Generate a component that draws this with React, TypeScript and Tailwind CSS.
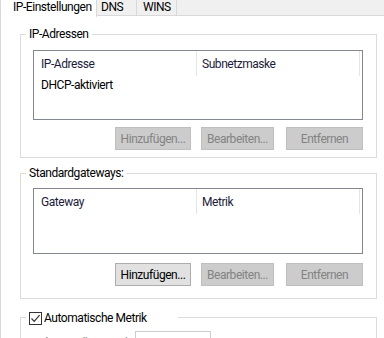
import React from "react";

const font = { fontFamily: 'Roboto, "Noto Sans", sans-serif' };

function Btn({ label, w, enabled, ml }: { label: string; w: string; enabled?: boolean; ml: string }) {
  return (
    <div
      className={`${w} ${ml} h-[23px] flex items-center justify-center border whitespace-nowrap ${
        enabled ? "bg-[#e1e1e1] border-[#adadad] text-black" : "bg-[#cccccc] border-[#bfbfbf] text-[#838383]"
      }`}
    >
      {label}
    </div>
  );
}

function ListView({ h, mt, col1, col2, rows }: { h: string; mt: string; col1: string; col2: string; rows: string[] }) {
  return (
    <div className={`${mt} ml-[12px] w-[330px] ${h} border border-[#828790] bg-white`}>
      <div className="flex h-[25px] text-[#1b1b3a]">
        <div className="w-[163px] border-r border-[#e5e5e5] pl-[7px] leading-[26px]">{col1}</div>
        <div className="w-[163px] border-r border-[#e5e5e5] pl-[5px] leading-[26px]">{col2}</div>
      </div>
      {rows.map((r) => (
        <div key={r} className="h-[17px] leading-[18px] pl-[7px] text-black">
          {r}
        </div>
      ))}
    </div>
  );
}

export default function App() {
  return (
    <div
      className="w-[384px] h-[338px] overflow-hidden bg-white text-black text-[12px] tracking-[-0.45px] whitespace-nowrap"
      style={font}
    >
      <div className="h-[16px] bg-[#f0f0f0] border-b border-[#d9d9d9] flex items-start">
        <div className="w-[97px] h-[17px] bg-white border-r border-l border-[#d9d9d9] pl-[12px] leading-[14px] relative z-10">
          IP-Einstellungen
        </div>
        <div className="w-[40px] h-[15px] border-r border-[#d9d9d9] pl-[4px] leading-[15px]">DNS</div>
        <div className="w-[40px] h-[15px] border-r border-[#d9d9d9] pl-[6px] leading-[15px]">WINS</div>
      </div>
      <div className="border-l border-[#d9d9d9] pl-[19px] pt-[18px] flex flex-col h-[322px]">
        {/* Group 1 */}
        <div className="relative w-[357px] h-[124px] border border-[#dcdcdc] shrink-0">
          <span className="absolute left-[5px] top-[-9px] px-[3px] bg-white leading-[16px]">IP-Adressen</span>
          <ListView h="h-[70px]" mt="mt-[15px]" col1="IP-Adresse" col2="Subnetzmaske" rows={["DHCP-aktiviert"]} />
          <div className="flex mt-[7px]">
            <Btn label="Hinzufügen..." w="w-[76px]" ml="ml-[94px]" />
            <Btn label="Bearbeiten..." w="w-[73px]" ml="ml-[10px]" />
            <Btn label="Entfernen" w="w-[77px]" ml="ml-[12px]" />
          </div>
        </div>
        {/* Group 2 */}
        <div className="relative mt-[15px] w-[357px] h-[126px] border border-[#dcdcdc] shrink-0">
          <span className="absolute left-[5px] top-[-9px] px-[3px] bg-white leading-[16px]">Standardgateways:</span>
          <ListView h="h-[66px]" mt="mt-[14px]" col1="Gateway" col2="Metrik" rows={[]} />
          <div className="flex mt-[9px]">
            <Btn label="Hinzufügen..." w="w-[76px]" ml="ml-[94px]" enabled />
            <Btn label="Bearbeiten..." w="w-[73px]" ml="ml-[10px]" />
            <Btn label="Entfernen" w="w-[77px]" ml="ml-[12px]" />
          </div>
        </div>
        {/* Group 3 */}
        <div className="relative mt-[18px] w-[357px] h-[80px] border border-[#dcdcdc] shrink-0">
          <div className="absolute left-[5px] top-[-8px] w-[152px] pl-[3px] bg-white flex items-center h-[16px]">
            <div className="w-[13px] h-[13px] border border-[#333333] bg-white flex items-center justify-center shrink-0">
              <svg width="11" height="11" viewBox="0 0 11 11">
                <path d="M1.5 5.5 L4.2 8.3 L9.6 2.2" fill="none" stroke="#333333" strokeWidth="1.2" />
              </svg>
            </div>
            <span className="ml-[2px] leading-[16px]">Automatische Metrik</span>
          </div>
          <div className="flex items-start mt-[13px]">
            <span className="ml-[12px] w-[102px] leading-[20px] text-[#838383] mt-[2px]">Schnittstellenmetrik:</span>
            <div className="w-[76px] h-[22px] border border-[#cccccc] bg-white" />
          </div>
        </div>
      </div>
    </div>
  );
}
